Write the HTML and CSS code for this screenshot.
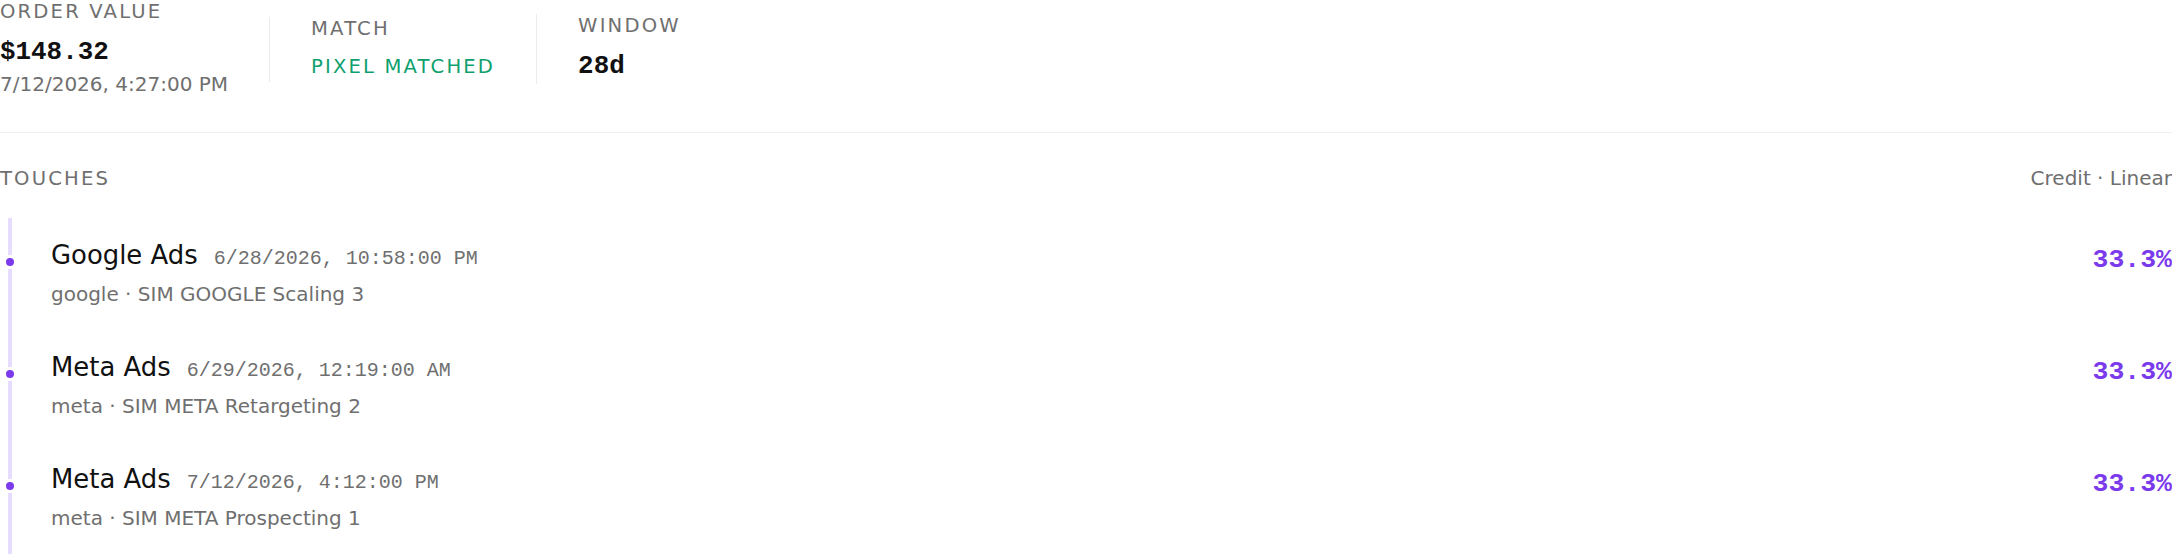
FILE: index.html
```html
<!DOCTYPE html>
<html lang="en">
<head>
    <meta charset="UTF-8">
    <meta name="viewport" content="width=device-width, initial-scale=1.0">
    <title>Order attribution</title>
    <link rel="stylesheet" href="styles.css">
</head>
<body>
    <div class="attribution">
        <div class="summary">
            <div class="stat">
                <div class="stat-label">Order value</div>
                <div class="stat-value">$148.32</div>
                <div class="stat-sub">7/12/2026, 4:27:00 PM</div>
            </div>
            <div class="stat">
                <div class="stat-label">Match</div>
                <div class="stat-tag">Pixel matched</div>
            </div>
            <div class="stat">
                <div class="stat-label">Window</div>
                <div class="stat-value">28d</div>
            </div>
        </div>

        <div class="touches">
            <div class="touches-head">
                <span class="stat-label">Touches</span>
                <span class="touches-model">Credit · Linear</span>
            </div>
            <ol class="timeline">
                <li class="touch">
                    <div class="touch-info">
                        <div class="touch-title">
                            <span class="touch-channel">Google Ads</span>
                            <span class="touch-time">6/28/2026, 10:58:00 PM</span>
                        </div>
                        <div class="touch-meta">google · SIM GOOGLE Scaling 3</div>
                    </div>
                    <div class="touch-credit">33.3%</div>
                </li>
                <li class="touch">
                    <div class="touch-info">
                        <div class="touch-title">
                            <span class="touch-channel">Meta Ads</span>
                            <span class="touch-time">6/29/2026, 12:19:00 AM</span>
                        </div>
                        <div class="touch-meta">meta · SIM META Retargeting 2</div>
                    </div>
                    <div class="touch-credit">33.3%</div>
                </li>
                <li class="touch">
                    <div class="touch-info">
                        <div class="touch-title">
                            <span class="touch-channel">Meta Ads</span>
                            <span class="touch-time">7/12/2026, 4:12:00 PM</span>
                        </div>
                        <div class="touch-meta">meta · SIM META Prospecting 1</div>
                    </div>
                    <div class="touch-credit">33.3%</div>
                </li>
            </ol>
        </div>
    </div>
</body>
</html>
```

FILE: styles.css
```css
body {
    margin: 0;
    font-family: "DejaVu Sans", "Noto Sans", sans-serif;
    color: #111;
    background: #fff;
}

/* top row: value / match / window */
.summary {
    display: flex;
    align-items: center;
    padding-bottom: 33px;
    border-bottom: 1px solid #efeff5;
}
.stat {
    padding: 0 41px;
}
.stat:first-child {
    padding-left: 0;
}
.stat + .stat {
    border-left: 1px solid #ececf0;
}
.stat-label {
    font-size: 19.6px;
    line-height: 23.7px;
    letter-spacing: 0.11em;
    text-transform: uppercase;
    color: #6f6f6f;
}
.stat .stat-label {
    margin-bottom: 10px;
}
.stat-value {
    font-family: "Liberation Mono", monospace;
    font-weight: 700;
    font-size: 25.9px;
    line-height: 36px;
}
.stat-sub {
    margin-top: 1.5px;
    font-size: 20px;
    line-height: 27.4px;
    color: #6f6f6f;
}
.stat-tag {
    font-size: 19.6px;
    line-height: 31px;
    letter-spacing: 0.11em;
    text-transform: uppercase;
    color: #0e9f6e;
}

/* touches list */
.touches-head {
    display: flex;
    justify-content: space-between;
    align-items: baseline;
    padding-top: 34px;
    margin-bottom: 28px;
}
.touches-model {
    font-size: 20px;
    line-height: 23.7px;
    color: #6f6f6f;
}
.timeline {
    list-style: none;
    margin: 0 0 0 8px;
    padding: 0 0 0 39px;
    border-left: 4px solid #e6dcfd;
}
.touch {
    position: relative;
    display: flex;
    justify-content: space-between;
    align-items: flex-start;
    padding: 21.5px 0 23.5px;
}
/* dot sitting on the line */
.touch::before {
    content: "";
    position: absolute;
    left: -48px;
    top: 37px;
    width: 8px;
    height: 8px;
    border: 3px solid #fff;
    border-radius: 50%;
    background: #7c3aed;
}
.touch-title {
    display: flex;
    align-items: baseline;
    gap: 16px;
    line-height: 30px;
}
.touch-channel {
    font-size: 25.9px;
}
.touch-time {
    font-family: "Liberation Mono", monospace;
    font-size: 20px;
    line-height: 1;
    color: #6f6f6f;
}
.touch-meta {
    margin-top: 11px;
    font-size: 20px;
    line-height: 26px;
    color: #6f6f6f;
}
.touch-credit {
    font-family: "Liberation Mono", monospace;
    font-weight: 700;
    font-size: 26.5px;
    line-height: 30px;
    padding-top: 5px;
    color: #7c3aed;
}
```
